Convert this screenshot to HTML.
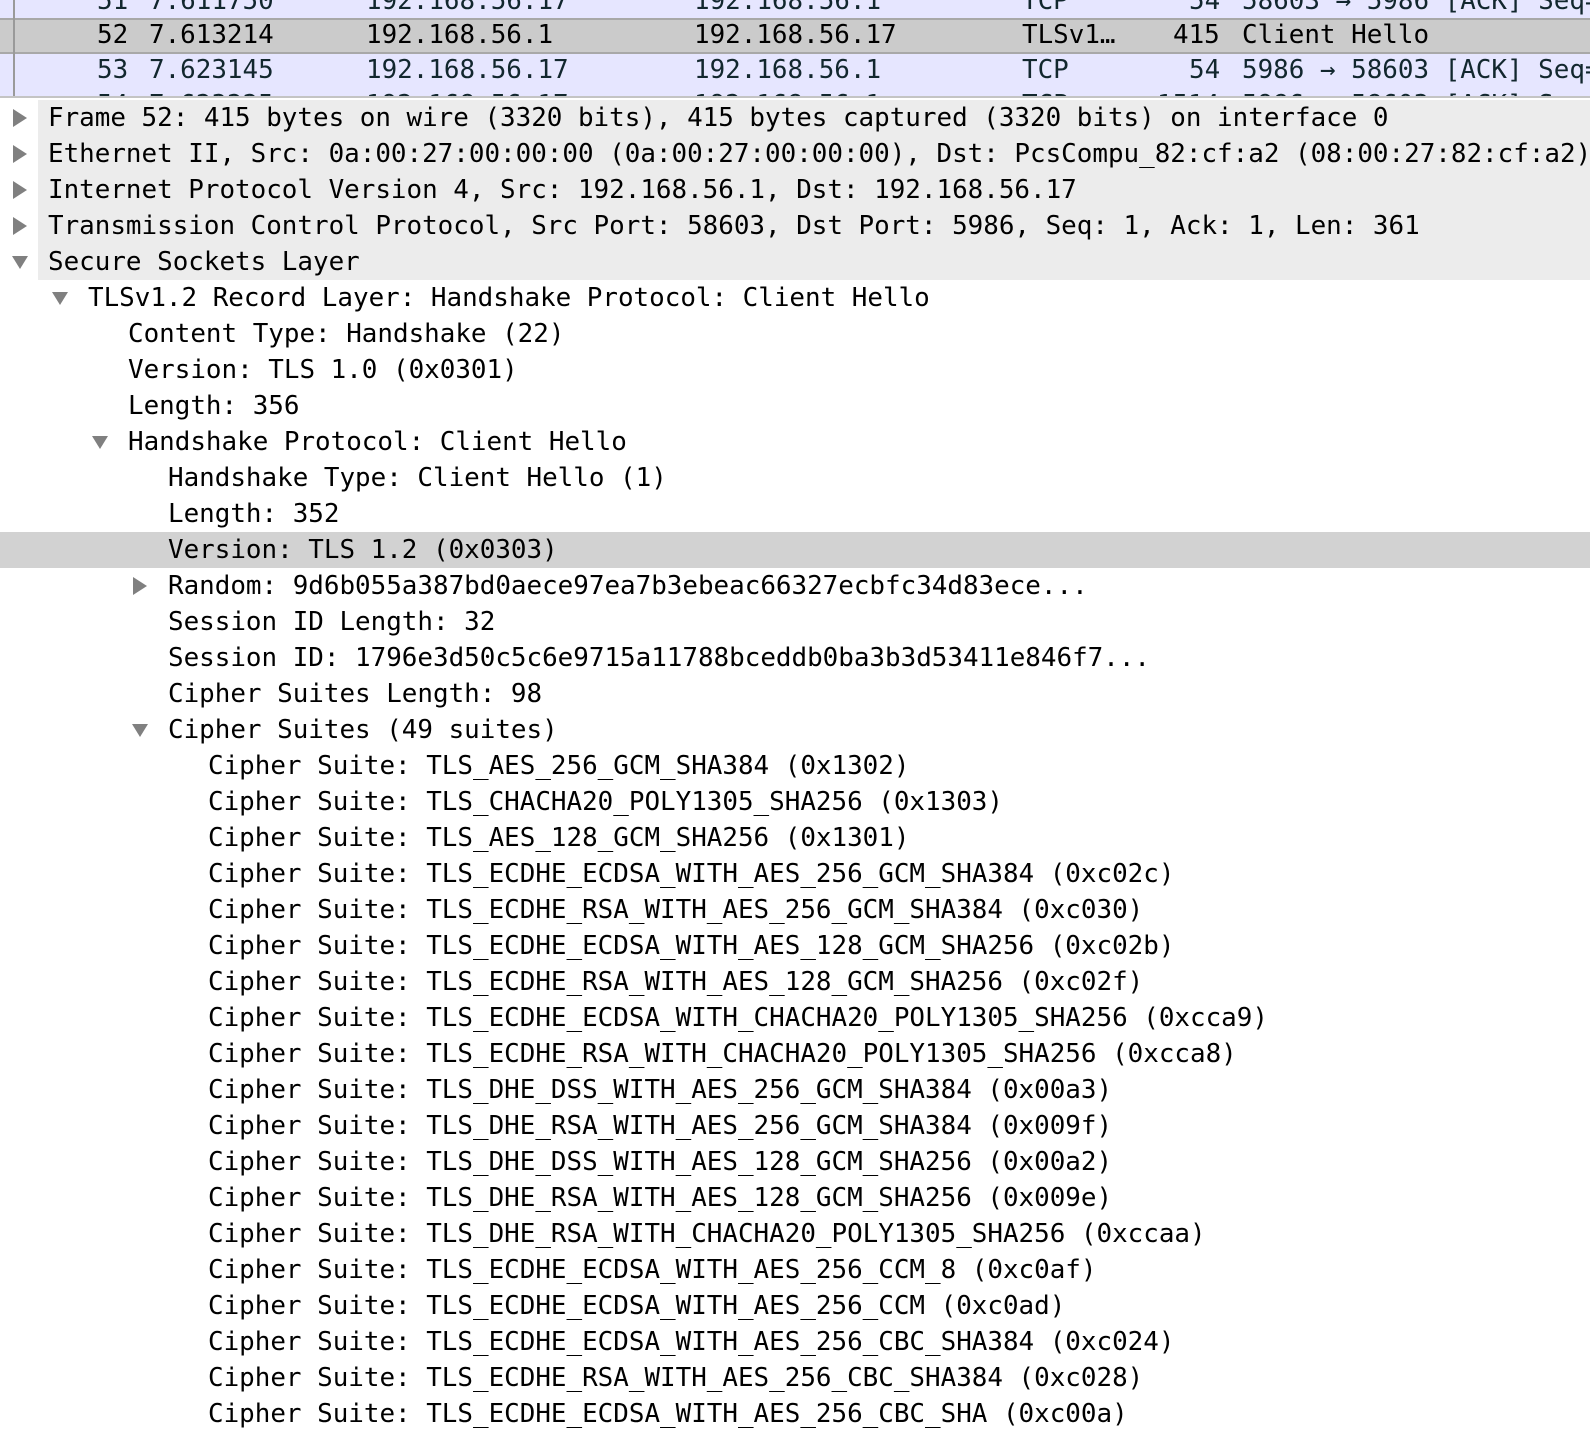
<!DOCTYPE html>
<html><head><meta charset="utf-8"><style>
*{margin:0;padding:0;box-sizing:border-box}
body{width:1590px;height:1436px;overflow:hidden;background:#fff;font-family:"DejaVu Sans Mono","Liberation Mono",monospace;font-size:25.9px;color:#000;position:relative}
.pl{position:absolute;left:0;top:0;width:1590px;height:98px;background:#e6e6ff;overflow:hidden;border-bottom:2px solid #c4c4c4}
.pr{position:absolute;left:0;width:1590px;height:35px;color:#12272e;white-space:pre;line-height:35px}
.pr span{position:absolute;top:0}
.sel{background:#cbcbcb;border-top:2px solid #a8a8a8;border-bottom:2px solid #a8a8a8;color:#000;line-height:31px}
.vl{position:absolute;left:13px;top:0;width:2px;height:98px;background:#9a9a9a}
.r{position:absolute;left:0;width:1590px;height:36px;line-height:36px;white-space:pre}
.g{background:#ececec;left:38px;width:1552px}
.hl{background:#d2d2d2}
.t{position:absolute}
.tr{width:0;height:0;border-top:9px solid transparent;border-bottom:9px solid transparent;border-left:14px solid #808080;top:9px}
.td{width:0;height:0;border-left:8px solid transparent;border-right:8px solid transparent;border-top:13px solid #808080;top:12px}
</style></head><body>
<div class="pl">
<div class="pr" style="top:-16px"><span style="left:97px">51</span><span style="left:149px">7.611750</span><span style="left:366px">192.168.56.17</span><span style="left:694px">192.168.56.1</span><span style="left:1022px">TCP</span><span style="left:1189px">54</span><span style="left:1242px">58603 → 5986 [ACK] Seq=</span></div>
<div class="pr sel" style="top:18px;height:36px"><span style="left:97px">52</span><span style="left:149px">7.613214</span><span style="left:366px">192.168.56.1</span><span style="left:694px">192.168.56.17</span><span style="left:1022px">TLSv1…</span><span style="left:1173px">415</span><span style="left:1242px">Client Hello</span></div>
<div class="pr" style="top:53px"><span style="left:97px">53</span><span style="left:149px">7.623145</span><span style="left:366px">192.168.56.17</span><span style="left:694px">192.168.56.1</span><span style="left:1022px">TCP</span><span style="left:1189px">54</span><span style="left:1242px">5986 → 58603 [ACK] Seq=</span></div>
<div class="pr" style="top:88px"><span style="left:97px">54</span><span style="left:149px">7.623225</span><span style="left:366px">192.168.56.17</span><span style="left:694px">192.168.56.1</span><span style="left:1022px">TCP</span><span style="left:1157px">1514</span><span style="left:1242px">5986 → 58603 [ACK] Seq=</span></div>
<div class="vl"></div>
</div>

<div class="r g" style="top:100px"></div>
<div class="r g" style="top:136px"></div>
<div class="r g" style="top:172px"></div>
<div class="r g" style="top:208px"></div>
<div class="r g" style="top:244px"></div>
<div class="r hl" style="top:532px"></div>

<div id="tree"></div>
<script>
var rows=[
[0,'r','Frame 52: 415 bytes on wire (3320 bits), 415 bytes captured (3320 bits) on interface 0'],
[0,'r','Ethernet II, Src: 0a:00:27:00:00:00 (0a:00:27:00:00:00), Dst: PcsCompu_82:cf:a2 (08:00:27:82:cf:a2)'],
[0,'r','Internet Protocol Version 4, Src: 192.168.56.1, Dst: 192.168.56.17'],
[0,'r','Transmission Control Protocol, Src Port: 58603, Dst Port: 5986, Seq: 1, Ack: 1, Len: 361'],
[0,'d','Secure Sockets Layer'],
[1,'d','TLSv1.2 Record Layer: Handshake Protocol: Client Hello'],
[2,'','Content Type: Handshake (22)'],
[2,'','Version: TLS 1.0 (0x0301)'],
[2,'','Length: 356'],
[2,'d','Handshake Protocol: Client Hello'],
[3,'','Handshake Type: Client Hello (1)'],
[3,'','Length: 352'],
[3,'','Version: TLS 1.2 (0x0303)'],
[3,'r','Random: 9d6b055a387bd0aece97ea7b3ebeac66327ecbfc34d83ece...'],
[3,'','Session ID Length: 32'],
[3,'','Session ID: 1796e3d50c5c6e9715a11788bceddb0ba3b3d53411e846f7...'],
[3,'','Cipher Suites Length: 98'],
[3,'d','Cipher Suites (49 suites)']];
var cs=['TLS_AES_256_GCM_SHA384 (0x1302)','TLS_CHACHA20_POLY1305_SHA256 (0x1303)','TLS_AES_128_GCM_SHA256 (0x1301)','TLS_ECDHE_ECDSA_WITH_AES_256_GCM_SHA384 (0xc02c)','TLS_ECDHE_RSA_WITH_AES_256_GCM_SHA384 (0xc030)','TLS_ECDHE_ECDSA_WITH_AES_128_GCM_SHA256 (0xc02b)','TLS_ECDHE_RSA_WITH_AES_128_GCM_SHA256 (0xc02f)','TLS_ECDHE_ECDSA_WITH_CHACHA20_POLY1305_SHA256 (0xcca9)','TLS_ECDHE_RSA_WITH_CHACHA20_POLY1305_SHA256 (0xcca8)','TLS_DHE_DSS_WITH_AES_256_GCM_SHA384 (0x00a3)','TLS_DHE_RSA_WITH_AES_256_GCM_SHA384 (0x009f)','TLS_DHE_DSS_WITH_AES_128_GCM_SHA256 (0x00a2)','TLS_DHE_RSA_WITH_AES_128_GCM_SHA256 (0x009e)','TLS_DHE_RSA_WITH_CHACHA20_POLY1305_SHA256 (0xccaa)','TLS_ECDHE_ECDSA_WITH_AES_256_CCM_8 (0xc0af)','TLS_ECDHE_ECDSA_WITH_AES_256_CCM (0xc0ad)','TLS_ECDHE_ECDSA_WITH_AES_256_CBC_SHA384 (0xc024)','TLS_ECDHE_RSA_WITH_AES_256_CBC_SHA384 (0xc028)','TLS_ECDHE_ECDSA_WITH_AES_256_CBC_SHA (0xc00a)'];
cs.forEach(function(c){rows.push([4,'','Cipher Suite: '+c])});
var h='';
rows.forEach(function(r,i){
var top=100+36*i, x=48+40*r[0];
h+='<div class="r" style="top:'+top+'px;background:transparent">';
if(r[1]=='r')h+='<div class="t tr" style="left:'+(x-35)+'px"></div>';
if(r[1]=='d')h+='<div class="t td" style="left:'+(x-36)+'px"></div>';
h+='<span class="t" style="left:'+x+'px;top:0">'+r[2].replace(/&/g,'&amp;')+'</span></div>';
});
document.getElementById('tree').innerHTML=h;
</script>
</body></html>
